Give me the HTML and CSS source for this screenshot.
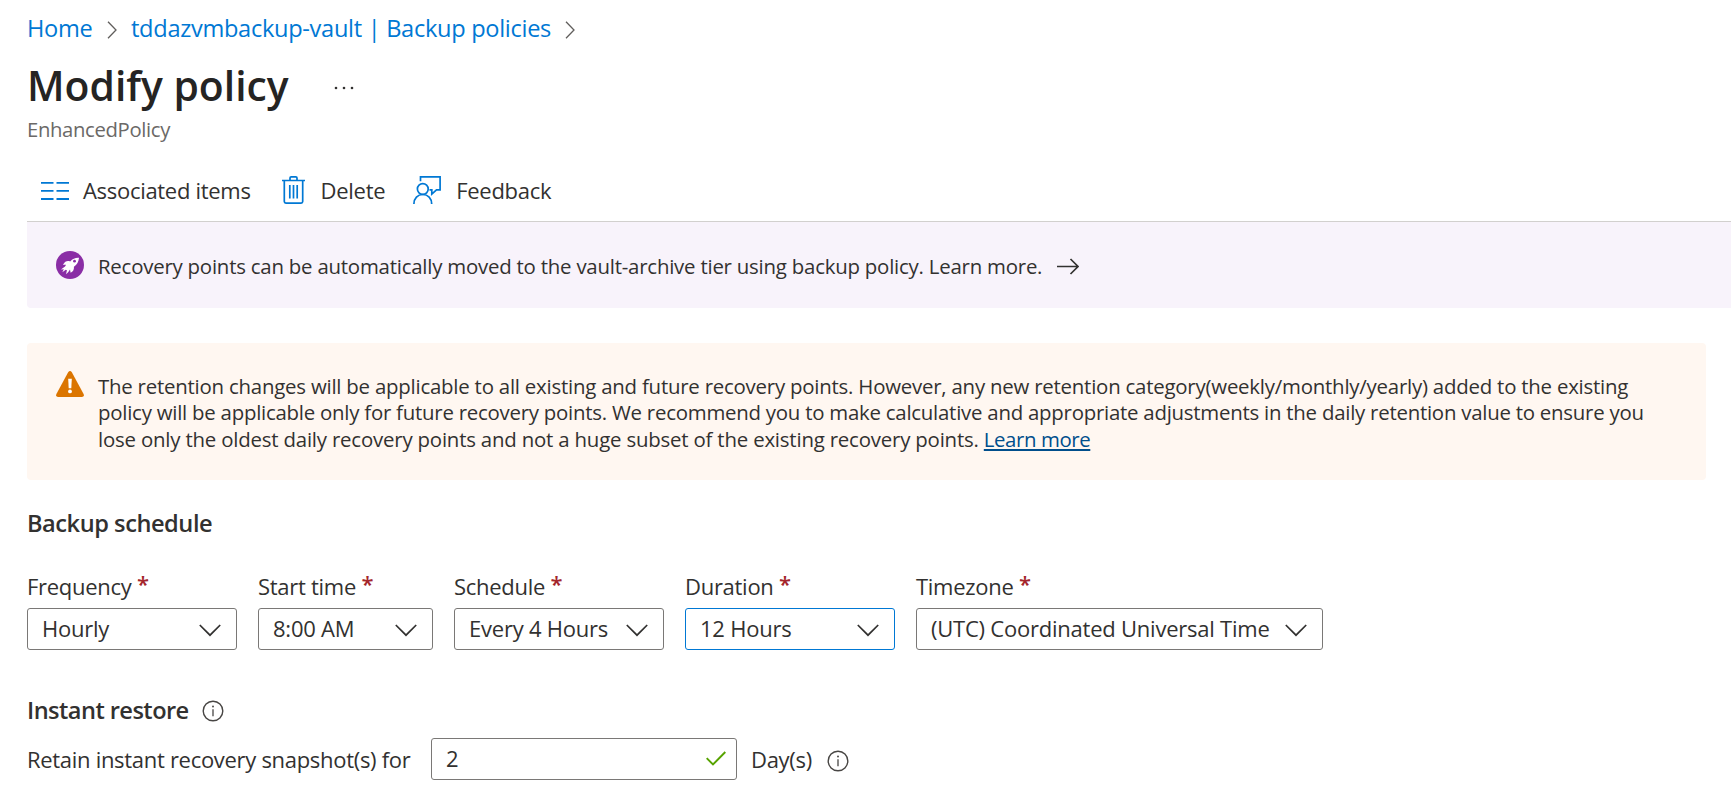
FILE: index.html
```html
<!DOCTYPE html>
<html lang="en">
<head>
<meta charset="utf-8">
<title>Modify policy</title>
<link rel="stylesheet" href="styles.css">
</head>
<body>
<svg width="0" height="0" class="defs" aria-hidden="true">
  <symbol id="chevron" viewBox="0 0 22 13"><path d="M.8 1l10.2 10.2L21.200 1" fill="none" stroke="currentColor" stroke-width="1.7"/></symbol>
  <symbol id="crumb" viewBox="0 0 10 18"><path d="M1 .8L9 9 1 17.200" fill="none" stroke="currentColor" stroke-width="1.3"/></symbol>
  <symbol id="info" viewBox="0 0 22 22"><g fill="none" stroke="currentColor"><circle cx="11" cy="11" r="9.800" stroke-width="1.400"/><path d="M11 9.300v7" stroke-width="1.300"/></g><circle cx="11" cy="6.500" r=".95" fill="currentColor"/></symbol>
</svg>
<main class="blade">
  <nav class="breadcrumb">
    <a class="crumb-home">Home</a>
    <svg class="sep"><use href="#crumb"/></svg>
    <a class="crumb-vault">tddazvmbackup-vault | Backup policies</a>
    <svg class="sep"><use href="#crumb"/></svg>
  </nav>
  <header class="title-row">
    <h1>Modify policy</h1>
    <svg class="more" viewBox="0 0 22 4"><g fill="#323130"><circle cx="3" cy="2" r="1.300"/><circle cx="11" cy="2" r="1.300"/><circle cx="19" cy="2" r="1.300"/></g></svg>
  </header>
  <p class="subtitle">EnhancedPolicy</p>

  <div class="toolbar">
    <div class="command">
      <svg class="ic-list" viewBox="0 0 28 20"><path d="M0 1.800h12.500M15.500 1.800H28M0 9.900h12.500M15.500 9.900H28M0 18h12.500M15.500 18H28" stroke="#0078d4" stroke-width="1.800"/></svg>
      <span>Associated items</span>
    </div>
    <div class="command">
      <svg class="ic-trash" viewBox="0 0 23 28" fill="none" stroke="#0078d4" stroke-width="1.700"><path d="M0 4.500h23M8 4.300V2.100Q8 .9 9.200.9h4.600Q15 .9 15 2.100v2.200M2.300 4.500v21q0 1.600 1.600 1.600h15.200q1.600 0 1.600-1.600v-21M7.800 9v13.500M11.500 9v13.500M15.200 9v13.500"/></svg>
      <span>Delete</span>
    </div>
    <div class="command">
      <svg class="ic-feedback" viewBox="0 0 28 28" fill="none" stroke="#0078d4" stroke-width="1.700"><path d="M7.500 5.200V.9h19.600v13h-3.600l-4.700 4.200v-4.200H16.500"/><circle cx="9.800" cy="13" r="5.400"/><path d="M.9 28c0-5.800 3.800-9.500 8.900-9.500s8.900 3.700 8.900 9.500"/></svg>
      <span>Feedback</span>
    </div>
  </div>

  <div class="banner banner-archive">
    <svg class="ic-rocket" viewBox="0 0 28 28"><circle cx="14" cy="14" r="14" fill="#8a2da5"/><path d="M22.200 5.800c-3.500.1-6.200 1.500-8.400 4.700-2.600-.6-4.700.2-5.900 2.300l-1 1.700 3.200-.3-.9 1.900-3.700 3.400 2.800-.6-1.200 3 3.200-2.700 1.200.3-.5 4 1.900-2.200 1.600-2.800.9 3.200c2.300-1.300 3.300-3.400 2.700-6.300 2.900-2.500 4.100-5.600 4.100-9.600z" transform="rotate(6 14 14)" fill="#fff"/><circle cx="18.500" cy="10.200" r="1.400" fill="#8a2da5"/></svg>
    <p>Recovery points can be automatically moved to the vault-archive tier using backup policy. Learn more.</p>
    <svg class="ic-arrow" viewBox="0 0 22 17"><path d="M0 8.500h21M13.500 1L21 8.500 13.500 16" fill="none" stroke="#323130" stroke-width="1.700"/></svg>
  </div>

  <div class="banner banner-warning">
    <svg class="ic-warn" viewBox="0 0 28 26"><path d="M12.300 1.100q1.700-2.200 3.400 0L27.600 23q1 2.700-1.700 3H2.100Q-.6 25.700.4 23z" fill="#db7500"/><path d="M12.200 7.700h3.600l-.5 9.600h-2.600z" fill="#fff"/><circle cx="14" cy="20.400" r="1.900" fill="#fff"/></svg>
    <p>The retention changes will be applicable to all existing and future recovery points. However, any new retention category(weekly/monthly/yearly) added to the existing<br><span class="tight">policy will be applicable only for future recovery points. We recommend you to make calculative and appropriate adjustments in the daily retention value to ensure you</span><br><span class="loose">lose only the oldest daily recovery points and not a huge subset of the existing recovery points.</span> <a class="link">Learn more</a></p>
  </div>

  <section class="schedule">
    <h2>Backup schedule</h2>
    <div class="fields">
      <div class="field w-frequency"><label>Frequency <b>*</b></label><div class="select"><span>Hourly</span><svg class="chev"><use href="#chevron"/></svg></div></div>
      <div class="field w-start"><label>Start time <b>*</b></label><div class="select"><span>8:00 AM</span><svg class="chev"><use href="#chevron"/></svg></div></div>
      <div class="field w-interval"><label>Schedule <b>*</b></label><div class="select"><span>Every 4 Hours</span><svg class="chev"><use href="#chevron"/></svg></div></div>
      <div class="field w-duration"><label>Duration <b>*</b></label><div class="select focused"><span>12 Hours</span><svg class="chev"><use href="#chevron"/></svg></div></div>
      <div class="field w-timezone"><label>Timezone <b>*</b></label><div class="select"><span>(UTC) Coordinated Universal Time</span><svg class="chev"><use href="#chevron"/></svg></div></div>
    </div>
  </section>

  <section class="restore">
    <h2>Instant restore <svg class="info"><use href="#info"/></svg></h2>
    <div class="retain">
      <span class="retain-label">Retain instant recovery snapshot(s) for</span>
      <div class="textbox"><span>2</span><svg class="ic-check" viewBox="0 0 20 15"><path d="M.7 7.200l6.300 6.300L19.300 1" fill="none" stroke="#57a300" stroke-width="1.900"/></svg></div>
      <span class="unit">Day(s)</span>
      <svg class="info"><use href="#info"/></svg>
    </div>
  </section>
</main>
</body>
</html>
```
FILE: styles.css
```css
* { box-sizing: border-box; }
body { margin: 0; background: #fff; color: #323130; font-family: "Open Sans", "Noto Sans", sans-serif; font-size: 22px; line-height: 30px; }
h1, h2, p { margin: 0; }
svg { display: block; flex: none; }
.defs { position: absolute; }
.blade { height: 786px; padding: 12px 0 0 27px; overflow: hidden; white-space: nowrap; }

.breadcrumb { display: flex; align-items: center; height: 32px; font-size: 23.6px; line-height: 32px; letter-spacing: -.3px; color: #0078d4; }
.sep { width: 10px; height: 18px; margin-top: 4px; color: #605e5c; }
.crumb-home { width: 80px; }
.crumb-vault { width: 434px; margin-left: 14px; }

.title-row { display: flex; align-items: center; height: 50px; margin-top: 16px; }
h1 { width: 306px; font-size: 40.8px; line-height: 50px; font-weight: 600; letter-spacing: 0; color: #252423; }
.more { width: 22px; height: 4px; margin-top: 6px; }
.subtitle { margin-top: 5px; font-size: 20.3px; line-height: 28px; letter-spacing: -.35px; color: #6b6967; }

.toolbar { display: flex; align-items: center; gap: 31px; height: 62px; margin-top: 17px; padding-left: 14px; border-bottom: 1px solid #d2d0ce; letter-spacing: -.3px; }
.command { display: flex; align-items: center; }
.command span { margin-top: -2px; }
.ic-list { width: 28px; height: 20px; margin-right: 14px; }
.ic-trash { width: 23px; height: 28px; margin-right: 16px; margin-top: -2px; }
.ic-feedback { width: 28px; height: 28px; margin-right: 15px; margin-left: -3px; margin-top: -2px; }

.banner { display: flex; font-size: 20.4px; line-height: 26.5px; letter-spacing: -.215px; padding-left: 29px; }
.banner p { margin-left: 14px; }
.banner-archive { align-items: center; height: 86px; background: #f8f3fb; border-radius: 0 0 0 4px; }
.banner-archive p { margin-top: 2px; }
.ic-rocket { width: 28px; height: 28px; }
.ic-arrow { width: 22px; height: 17px; margin: 2px 0 0 15px; }
.banner-warning { width: 1679px; height: 137px; margin-top: 35px; padding-top: 29.7px; background: #fff7f1; border-radius: 4px; }
.ic-warn { width: 28px; height: 26px; margin-top: -2px; }
.tight { letter-spacing: -.235px; }
.loose { letter-spacing: -.19px; }
.link { color: #004e8c; text-decoration: underline; letter-spacing: -.4px; text-underline-offset: 2px; text-decoration-thickness: 1.5px; }

h2 { font-size: 23.6px; line-height: 32px; font-weight: 600; letter-spacing: -.45px; }
.schedule { margin-top: 27px; }
.fields { display: flex; gap: 21px; margin-top: 32px; }
.field label { display: block; height: 37px; line-height: 30px; letter-spacing: -.28px; }
.field b { display: inline-block; margin-top: -3px; vertical-align: 3px; line-height: 20px; font-weight: 600; color: #a4262c; }
.w-frequency, .w-interval, .w-duration { width: 210px; }
.w-start { width: 175px; }
.w-timezone { width: 407px; }
.select, .textbox { display: flex; align-items: center; justify-content: space-between; height: 42px; border: 1px solid #7a7876; border-radius: 3px; letter-spacing: -.23px; }
.select { padding: 0 15px 0 14px; }
.select span { margin-top: -2px; }
.focused { border-color: #0078d4; }
.chev { width: 22px; height: 13px; margin-top: 2px; }

.restore { margin-top: 44px; }
.restore h2 { display: flex; align-items: center; letter-spacing: -.55px; }
.info { width: 22px; height: 22px; color: #484644; }
.restore h2 .info { margin: 2px 0 0 13px; }
.retain { display: flex; align-items: center; margin-top: 12px; letter-spacing: -.3px; }
.retain-label { width: 404px; }
.textbox { width: 306px; padding: 0 10px 2px 14px; }
.ic-check { width: 20px; height: 15px; margin-top: 1px; }
.unit { width: 60px; margin-left: 14px; }
.retain .info { margin: 3px 0 0 16px; }
```
